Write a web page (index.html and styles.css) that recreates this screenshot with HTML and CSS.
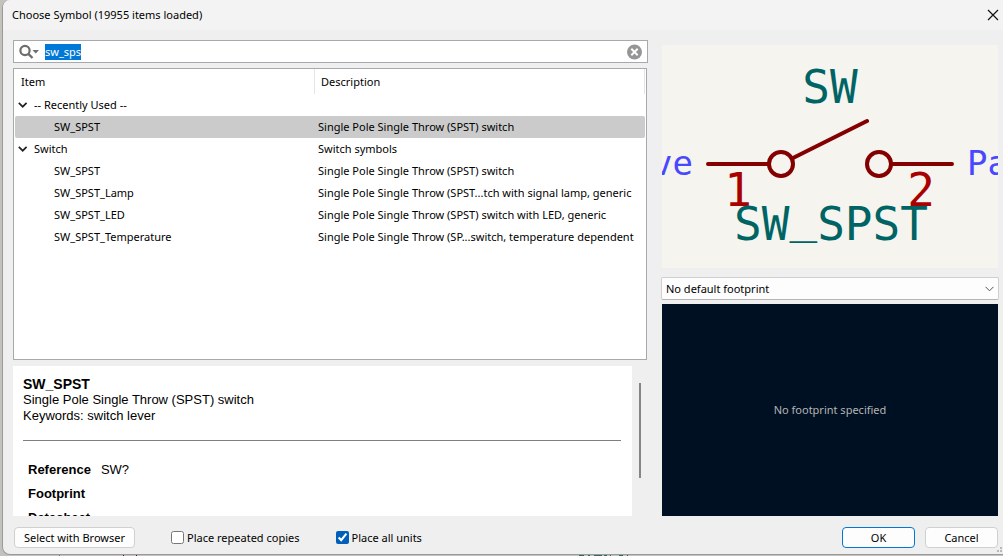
FILE: index.html
```html
<!DOCTYPE html>
<html lang="en">
<head>
<meta charset="utf-8">
<title>Choose Symbol</title>
<link rel="stylesheet" href="styles.css">
</head>
<body>
<main class="dialog">
  <header class="titlebar">
    <h1 class="title">Choose Symbol (19955 items loaded)</h1>
    <button class="close" type="button" aria-label="Close">
      <svg width="12" height="12" viewBox="0 0 12 12"><path d="M1 1l10 10M11 1L1 11" stroke="#111" stroke-width="1.2" fill="none"/></svg>
    </button>
  </header>

  <div class="content">
    <section class="left">
      <div class="search">
        <svg class="search-icon" width="21" height="16" viewBox="0 0 21 16"><circle cx="6" cy="6.5" r="4.6" fill="none" stroke="#6e6e6e" stroke-width="2.2"/><path d="M9.3 9.8l4.2 4.2" stroke="#6e6e6e" stroke-width="2.4"/><path d="M13.5 6h6.5l-3.2 3.6z" fill="#6e6e6e"/></svg>
        <input class="search-input" id="filter" type="text" value="sw_sps" aria-label="Filter">
        <button class="clear" type="button" aria-label="Clear">
          <svg width="16" height="16" viewBox="0 0 16 16"><circle cx="8.5" cy="8" r="7.5" fill="#969696"/><path d="M5.3 4.8l6.4 6.4M11.7 4.8l-6.4 6.4" stroke="#fff" stroke-width="2"/></svg>
        </button>
      </div>

      <div class="tree">
        <table class="tree-table">
          <thead>
            <tr><th class="col-item" scope="col">Item</th><th scope="col">Description</th></tr>
          </thead>
          <tbody>
            <tr class="group"><td><svg class="chevron" width="10" height="8" viewBox="0 0 10 8"><path d="M.8 1.8l3.9 3.9 3.9-3.9" fill="none" stroke="#222" stroke-width="1.7"/></svg>-- Recently Used --</td><td></td></tr>
            <tr class="selected"><td class="child">SW_SPST</td><td>Single Pole Single Throw (SPST) switch</td></tr>
            <tr class="group"><td><svg class="chevron" width="10" height="8" viewBox="0 0 10 8"><path d="M.8 1.8l3.9 3.9 3.9-3.9" fill="none" stroke="#222" stroke-width="1.7"/></svg>Switch</td><td>Switch symbols</td></tr>
            <tr><td class="child">SW_SPST</td><td>Single Pole Single Throw (SPST) switch</td></tr>
            <tr><td class="child">SW_SPST_Lamp</td><td>Single Pole Single Throw (SPST...tch with signal lamp, generic</td></tr>
            <tr><td class="child">SW_SPST_LED</td><td>Single Pole Single Throw (SPST) switch with LED, generic</td></tr>
            <tr><td class="child">SW_SPST_Temperature</td><td>Single Pole Single Throw (SP...switch, temperature dependent</td></tr>
          </tbody>
        </table>
      </div>

      <div class="details">
        <article class="details-page">
          <h2 class="details-name">SW_SPST</h2>
          <p class="details-line">Single Pole Single Throw (SPST) switch</p>
          <p class="details-line">Keywords: switch lever</p>
          <hr class="rule">
          <table class="fields">
            <tbody>
              <tr><th scope="row">Reference</th><td>SW?</td></tr>
              <tr><th scope="row">Footprint</th><td></td></tr>
              <tr><th scope="row">Datasheet</th><td></td></tr>
            </tbody>
          </table>
        </article>
        <div class="scrollbar"><div class="thumb"></div></div>
      </div>
    </section>

    <section class="right">
      <svg class="symbol" viewBox="0 0 336 223" preserveAspectRatio="xMidYMid slice" role="img" aria-label="Symbol preview">
        <g class="pin-name">
          <text x="31" y="130" text-anchor="end">Passive</text>
          <text x="305" y="130">Passive</text>
        </g>
        <g class="body">
          <path d="M46 119H107M231 119H290M131 113L205 76"/>
          <circle cx="119" cy="119" r="12"/>
          <circle cx="217" cy="119" r="12"/>
        </g>
        <g class="pin-number">
          <text x="76" y="161" text-anchor="middle">1</text>
          <text x="259" y="161" text-anchor="middle">2</text>
        </g>
        <g class="field">
          <text x="168" y="58" text-anchor="middle">SW</text>
          <text x="169" y="195" text-anchor="middle">SW<tspan dy="-8">_</tspan><tspan dy="8">SPST</tspan></text>
        </g>
      </svg>
      <select class="footprint" aria-label="Footprint"><option>No default footprint</option></select>
      <div class="board">No footprint specified</div>
    </section>
  </div>

  <footer class="footer">
    <button class="btn browse" type="button">Select with Browser</button>
    <label class="check"><input type="checkbox">Place repeated copies</label>
    <label class="check"><input type="checkbox" checked>Place all units</label>
    <div class="actions">
      <button class="btn primary" type="button">OK</button>
      <button class="btn" type="button">Cancel</button>
    </div>
    <svg class="grip" width="5" height="5" viewBox="0 0 5 5"><path d="M3 0h2v2H3zM0 3h2v2H0zM3 3h2v2H3z" fill="#b8b8b8"/></svg>
  </footer>
</main>
<svg class="backdrop" height="1">
  <path d="M57 0h1v1h-1z" fill="#777"/>
  <path d="M121 0h1v1h-1zM134 0h1v1h-1z" fill="#840000"/>
  <path d="M577 0h5v1h-5zM586 0h2v1h-2zM592 0h8v1h-8zM602 0h3v1h-3zM608 0h1v1h-1zM617 0h4v1h-4zM625 0h1v1h-1z" fill="#2c6b6b"/>
</svg>
<script src="app.js"></script>
</body>
</html>
```
FILE: styles.css
```css
* {
  box-sizing: border-box;
}

body {
  display: flex;
  flex-direction: column;
  margin: 0;
  height: 100vh;
  padding-left: 2px;
  overflow: hidden;
  background: #c4c2bd;
  color: #000;
  font: 11px/16px "Segoe UI", "Noto Sans", sans-serif;
}

button,
input,
select {
  font: inherit;
  color: inherit;
}

h1,
h2,
p {
  margin: 0;
  font-weight: 400;
}

svg {
  display: block;
}

.dialog {
  display: flex;
  flex-direction: column;
  flex: 1;
  min-height: 0;
  border: 1px solid #9a9a9a;
  border-width: 0 0 1px 1px;
  border-radius: 8px 0 0 8px;
  background: #efefef;
  overflow: hidden;
}

.backdrop {
  width: 100%;
}

.titlebar {
  display: flex;
  align-items: center;
  justify-content: space-between;
  height: 30px;
  padding: 0 4px 0 9px;
  background: #f3f3f3;
}

.title {
  font-size: 11px;
}

.close,
.clear {
  padding: 0;
  border: 0;
  background: none;
}

.content {
  display: grid;
  grid-template-columns: minmax(0, 635fr) minmax(0, 338fr);
  column-gap: 13px;
  flex: 1;
  min-height: 0;
  padding: 10px 4px 0 10px;
}

.left,
.right {
  display: flex;
  flex-direction: column;
  min-height: 0;
}

.search {
  display: flex;
  align-items: center;
  height: 23px;
  margin-bottom: 5px;
  padding: 0 5px;
  border: 1px solid #a8a9ae;
  background: #fff;
}

.search-input {
  flex: 1;
  min-width: 0;
  padding: 0 5px;
  border: 0;
  outline: 0;
  background: none;
}

.search-input::selection {
  background: #0078d7;
  color: #fff;
}

.tree {
  flex: 291;
  min-height: 0;
  margin-right: 1px;
  padding: 0 1px;
  border: 1px solid #a8a9ae;
  background: #fff;
  overflow: hidden;
}

.tree-table {
  width: 100%;
  table-layout: fixed;
  border-collapse: separate;
  border-spacing: 0;
  white-space: nowrap;
}

.tree-table th {
  height: 25px;
  padding: 0 6px;
  border-right: 1px solid #e5e5e5;
  font-weight: 400;
  text-align: left;
}

.col-item {
  width: 300px;
}

.tree-table td {
  height: 22px;
  padding: 0 3px;
}

.tree-table .child {
  padding-left: 39px;
}

.chevron {
  display: inline-block;
  margin-right: 6px;
}

.selected td {
  background: #cbcbcb;
}

.selected td:first-child {
  border-radius: 2px 0 0 2px;
}

.selected td:last-child {
  border-radius: 0 2px 2px 0;
}

.details {
  display: flex;
  flex: 151;
  min-height: 0;
  margin-top: 6px;
}

.details-page {
  flex: 1;
  padding: 10px 11px 0 10px;
  overflow: hidden;
  background: #fff;
  font: 13px/16px "Liberation Sans", Arial, sans-serif;
}

.details-name {
  font-size: 14px;
  font-weight: 700;
}

.rule {
  margin: 16px 0 17px;
  border: 0;
  border-top: 1px solid #808080;
}

.fields {
  margin-left: 1px;
  border-spacing: 0;
}

.fields th,
.fields td {
  padding: 4px;
  text-align: left;
}

.fields td {
  padding-left: 6px;
}

.scrollbar {
  width: 16px;
  padding: 17px 0 0 7px;
}

.thumb {
  width: 2px;
  height: 95px;
  background: #858585;
}

.right {
  padding-top: 5px;
}

.symbol {
  flex: 223;
  min-height: 0;
  margin: 0 1px;
  background: #f5f4ef;
  overflow: hidden;
  font-family: "DejaVu Sans Mono", monospace;
  font-size: 46px;
}

.pin-name {
  font-size: 34px;
  fill: #4848ff;
}

.pin-number {
  fill: #a90000;
}

.field {
  fill: #006464;
}

.body {
  fill: none;
  stroke: #840000;
  stroke-width: 4;
  stroke-linecap: round;
}

.footprint {
  height: 23px;
  margin: 9px 0 4px;
  padding: 0 4px;
  appearance: none;
  border: 1px solid #cfcfcf;
  border-bottom-color: #b5b5b5;
  border-radius: 2px;
  background: #fdfdfd url("data:image/svg+xml,%3Csvg xmlns='http://www.w3.org/2000/svg' width='9' height='6'%3E%3Cpath d='M.5.8l4 4 4-4' fill='none' stroke='%23555'/%3E%3C/svg%3E") no-repeat right 4px center;
}

.board {
  display: flex;
  flex: 212;
  align-items: center;
  justify-content: center;
  min-height: 0;
  margin: 0 1px;
  background: #001023;
  color: #b4b4b4;
}

.footer {
  position: relative;
  display: flex;
  align-items: center;
  height: 38px;
  padding: 5px 5px 0 11px;
}

.btn {
  width: 73px;
  height: 21px;
  padding: 0;
  border: 1px solid #d0d0d0;
  border-radius: 4px;
  background: #fdfdfd;
}

.browse {
  width: 121px;
}

.primary {
  border-color: #0078d4;
}

.check {
  display: flex;
  align-items: center;
  gap: 3px;
  margin-left: 36px;
}

.check input {
  width: 13px;
  height: 13px;
  margin: 0;
  accent-color: #005fb8;
}

.actions {
  display: flex;
  gap: 10px;
  margin-left: auto;
}

.grip {
  position: absolute;
  right: 1px;
  bottom: 2px;
}
```
FILE: app.js
```js
const filter = document.getElementById("filter");
filter.focus();
filter.select();
```
